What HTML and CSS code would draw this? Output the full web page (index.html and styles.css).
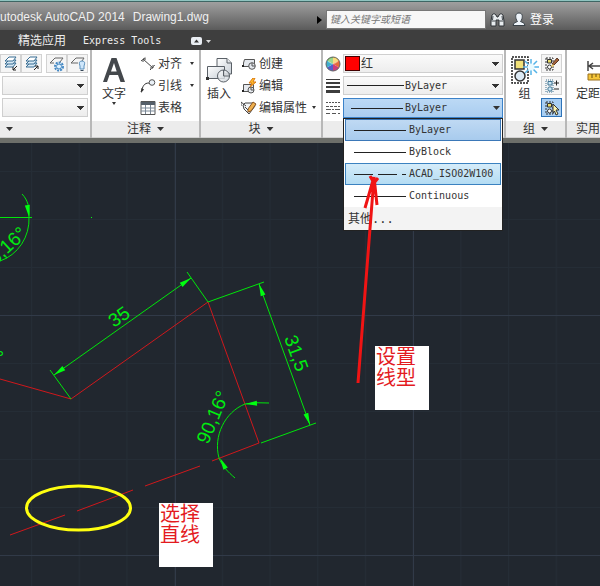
FILE: index.html
```html
<!DOCTYPE html>
<html lang="zh-CN">
<head>
<meta charset="utf-8">
<title>Autodesk AutoCAD 2014 - Drawing1.dwg</title>
<meta name="viewport" content="width=device-width, initial-scale=1">
<link rel="stylesheet" href="styles.css">
</head>
<body>
<div class="app">
  <header class="titlebar">
    <h1 class="title"><span>utodesk AutoCAD 2014</span><span>Drawing1.dwg</span></h1>
    <form class="search">
      <svg class="search-arrow" width="5" height="8" viewBox="0 0 5 8"><path d="M0 0L5 4L0 8Z"/></svg>
      <input class="search-box" type="text" placeholder="键入关键字或短语" aria-label="键入关键字或短语">
      <button class="bar-btn" type="button" aria-label="搜索">
        <svg width="15" height="15" viewBox="0 0 15 15"><path d="M2 3Q4 0 6 3L7 5H8L9 3Q11 0 13 3L14 9V14H9V8H6V14H1V9Z" fill="#e8ecef" stroke="#2e3236"/><path d="M1.500 9H5.500M9.500 9H13.500M3 4L2.500 8M12 4L12.500 8" stroke="#42484d"/></svg>
      </button>
      <button class="bar-btn login" type="button">
        <svg width="14" height="15" viewBox="0 0 14 15"><path d="M7 1C3.500 1 3.400 4 4 6.500Q4.500 8.500 5.500 9.500Q1 10.500 1 13.500H13Q13 10.500 8.500 9.500Q9.500 8.500 10 6.500C10.600 4 10.500 1 7 1Z" fill="#eef4fa" stroke="#3a4248"/></svg>
        <span>登录</span>
      </button>
    </form>
  </header>

  <nav class="tabs">
    <a class="tab" href="#featured">精选应用</a>
    <a class="tab mono" href="#express">Express Tools</a>
    <button class="tab-toggle" type="button" aria-label="最小化功能区">
      <svg width="20" height="8" viewBox="0 0 20 8"><rect x="0" y="0" width="11" height="8" rx="2" fill="#e9edf2"/><path d="M3 5.500L5.500 2.500L8 5.500Z" fill="#333"/><path d="M15 3H20L17.500 6Z" fill="#ddd"/></svg>
    </button>
  </nav>

  <div class="ribbon">
    <section class="panel layers">
      <div class="panel-body rows">
        <div class="layer-tools">
          <div class="btn-pair">
            <button class="tool" type="button" aria-label="图层匹配"><svg width="16" height="16" viewBox="0 0 16 16" fill="#d9eaf5" stroke="#376d93"><path d="M2 11L6 7H13L10 11Z"/><path d="M2 8L6 4H13L10 8Z"/><path d="M2 5L6 1H13L10 5Z" fill="#fff"/><path d="M14 10L10 14M10 11V14H13" fill="none" stroke="#222"/></svg></button>
            <button class="tool" type="button" aria-label="上一个图层"><svg width="16" height="16" viewBox="0 0 16 16" fill="#d9eaf5" stroke="#376d93"><path d="M2 11L6 7H13L10 11Z"/><path d="M2 8L6 4H13L10 8Z"/><path d="M2 5L6 1H13L10 5Z" fill="#fff"/><path d="M10 14L14 10M11 10H14V13" fill="none" stroke="#222"/></svg></button>
          </div>
          <div class="btn-pair">
            <button class="tool" type="button" aria-label="冻结"><svg width="16" height="16" viewBox="0 0 16 16" fill="none"><path d="M1 7L6 2H14L11 6" stroke="#666"/><path d="M1 7H5" stroke="#666"/><circle cx="10" cy="10.500" r="4" stroke="#4388c4" stroke-width="2" stroke-dasharray="2 1"/><circle cx="10" cy="10.500" r="2.500" fill="#e1f3ff" stroke="#4388c4"/></svg></button>
            <button class="tool" type="button" aria-label="关闭图层"><svg width="16" height="16" viewBox="0 0 16 16" fill="none"><path d="M1 7L6 2H14L12 5M1 7H8" stroke="#666"/><path d="M10 13V10Q8 5 12 5Q16 5 14 10V13Z" fill="#cfe7fb" stroke="#5c91bd"/><path d="M10.500 14.500H13.500" stroke="#345"/></svg></button>
          </div>
        </div>
        <select class="combo" aria-label="图层"><option></option></select>
        <select class="combo" aria-label="图层状态"><option></option></select>
      </div>
      <button class="panel-title start" type="button" aria-label="图层"><i class="caret"></i></button>
    </section>

    <section class="panel annotate">
      <div class="panel-body">
        <button class="big" type="button">
          <svg width="24" height="28" viewBox="0 0 24 28"><path d="M1 26L9.500 2H14.500L23 26H18.500L16 19H7.500L5 26ZM9 15.500H14.700L12 7Z" fill="#44484c" fill-rule="evenodd"/></svg>
          <span>文字</span><i class="caret small"></i>
        </button>
        <div class="rows commands">
          <button class="command" type="button"><svg width="16" height="16" viewBox="0 0 16 16" fill="none" stroke="#444"><path d="M1 5L6 1M10 14L15 9" stroke-dasharray="2 1"/><path d="M3 3L13 12M3 6V3H6M13 9V12H10"/></svg><span>对齐</span><i class="caret small"></i></button>
          <button class="command" type="button"><svg width="16" height="16" viewBox="0 0 16 16" fill="none" stroke="#555"><path d="M1 14C3 8 4 5 9 5" stroke="#333"/><path d="M1 15L1.500 10L4 11.500Z" fill="#333" stroke="none"/><circle cx="12" cy="4.500" r="2.800" fill="#eaf1f7"/></svg><span>引线</span><i class="caret small"></i></button>
          <button class="command" type="button"><svg width="16" height="16" viewBox="0 0 16 16"><path d="M1 1.500H15V14.500H1Z" fill="#fff" stroke="#555"/><path d="M1 2H15V5H1Z" fill="#555f69"/><path d="M1 8H15M1 11H15M5.500 5V14M10.500 5V14" stroke="#7a8896"/></svg><span>表格</span></button>
        </div>
      </div>
      <button class="panel-title" type="button">注释<i class="caret"></i></button>
    </section>

    <section class="panel block">
      <div class="panel-body">
        <button class="big" type="button">
          <svg width="28" height="28" viewBox="0 0 28 28"><defs><linearGradient id="sheet" x2="1" y2="1"><stop stop-color="#fff"/><stop offset="1" stop-color="#c8cfd6"/></linearGradient></defs><g fill="url(#sheet)" stroke="#5a6067"><path d="M12 2.500H22L26.500 7V18H12Z"/><path d="M22 2.500V7H26.500"/><path d="M2.500 10.500H19.500V22.500H2.500Z"/><circle cx="18.500" cy="20" r="6" fill-opacity=".8"/></g><path d="M18.500 14V20H25" fill="none" stroke="#5a6067"/><path d="M1 21H4V24H1Z" fill="#333"/></svg>
          <span>插入</span>
        </button>
        <div class="rows commands">
          <button class="command" type="button"><svg width="16" height="16" viewBox="0 0 16 16" fill="#e5e9ee" stroke="#555"><path d="M3.500 3.500H13.500V10.500H2.500V7Z"/><circle cx="11" cy="10" r="3.300"/><path d="M11 7V10H14" fill="none"/><path d="M1 9H3V11H1Z" fill="#222" stroke="none"/></svg><span>创建</span></button>
          <button class="command" type="button"><svg width="16" height="16" viewBox="0 0 16 16" fill="#e5e9ee" stroke="#555"><path d="M2.500 6.500H12.500V13.500H2.500Z"/><circle cx="10" cy="12" r="3"/><path d="M10 9V12H13" fill="none"/><path d="M12 0L8 5H11L9 9L15 4H12L14 0Z" fill="#ffbd2c" stroke="#d97913"/><path d="M1 12H3V14H1Z" fill="#222" stroke="none"/></svg><span>编辑</span></button>
          <button class="command" type="button"><svg width="16" height="16" viewBox="0 0 16 16" fill="#f3f5f7" stroke="#444"><path d="M2 5L4 3H13L14 6L8 14L3 9Z"/><path d="M0 2L5 6M0 2V6" fill="none"/><path d="M7 9L12 2L15 4L10 11L7 12Z" fill="#efb04d" stroke="#8a5727"/><path d="M4 7L7 10" fill="none"/></svg><span>编辑属性</span><i class="caret small"></i></button>
        </div>
      </div>
      <button class="panel-title" type="button">块<i class="caret"></i></button>
    </section>

    <section class="panel properties">
      <div class="panel-body rows">
        <div class="property">
          <svg width="16" height="16" viewBox="0 0 16 16"><path d="M8 8V1A7 7 0 0 1 14 4.500Z" fill="#f5c63f"/><path d="M8 8L14 4.500A7 7 0 0 1 14 11.500Z" fill="#e66b3b"/><path d="M8 8L14 11.500A7 7 0 0 1 8 15Z" fill="#cd3d78"/><path d="M8 8V15A7 7 0 0 1 2 11.500Z" fill="#5260ca"/><path d="M8 8L2 11.500A7 7 0 0 1 2 4.500Z" fill="#3eaecd"/><path d="M8 8L2 4.500A7 7 0 0 1 8 1Z" fill="#6bc154"/><circle cx="8" cy="8" r="7" fill="none" stroke="#666"/><ellipse cx="8" cy="5" rx="5" ry="3" fill="#fff" opacity=".35"/></svg>
          <div class="combo-wrap"><i class="swatch"></i><select class="combo color" aria-label="对象颜色"><option>红</option></select></div>
        </div>
        <div class="property">
          <svg width="16" height="16" viewBox="0 0 16 16" stroke="#3d3d3d"><path d="M1 1.500H15"/><path d="M1 5H15" stroke-width="2"/><path d="M1 9H15" stroke-width="2"/><path d="M1 13.500H15" stroke-width="3"/></svg>
          <div class="combo-wrap"><i class="line-sample weight"></i><select class="combo mono lined" aria-label="线宽"><option>ByLayer</option></select></div>
        </div>
        <div class="property">
          <svg width="16" height="16" viewBox="0 0 16 16" stroke="#555"><path d="M1 2.500H15" stroke-dasharray="2 1"/><path d="M1 6.500H15" stroke-dasharray="3 1"/><path d="M1 9.500H15" stroke-dasharray="5 1 2 1"/><path d="M1 13.500H15" stroke-dasharray="4 2"/></svg>
          <div class="combo-wrap">
            <button class="combo open mono" type="button" aria-haspopup="listbox" aria-expanded="true"><i class="line-sample"></i><span>ByLayer</span><i class="caret"></i></button>
            <div class="menu mono">
              <ul class="options" role="listbox" aria-label="线型">
                <li class="option current" role="option" aria-selected="true"><i class="sample"></i>ByLayer</li>
                <li class="option" role="option" aria-selected="false"><i class="sample"></i>ByBlock</li>
                <li class="option hover" role="option" aria-selected="false"><i class="sample dashed"></i>ACAD_ISO02W100</li>
                <li class="option" role="option" aria-selected="false"><i class="sample"></i>Continuous</li>
              </ul>
              <button class="more" type="button">其他...</button>
            </div>
          </div>
        </div>
      </div>
      <div class="panel-title"></div>
    </section>

    <section class="panel group">
      <div class="panel-body">
        <button class="big" type="button">
          <svg width="28" height="28" viewBox="0 0 28 28"><path d="M1 1H17V27H1Z" fill="#fff" stroke="#222" stroke-width="1.500" stroke-dasharray="2 1"/><path d="M4 4H13V13H4Z" fill="#f1e178" stroke="#333" stroke-width="1.500"/><circle cx="9" cy="20" r="5" fill="#dceaf5" stroke="#333" stroke-width="1.500"/><path d="M20 3V19M12 11H28M14 5L26 17M26 5L14 17" stroke="#55b4e7" stroke-width="1.500"/><circle cx="20" cy="11" r="3.500" fill="#e9faff"/></svg>
          <span>组</span>
        </button>
        <div class="rows">
          <button class="tool" type="button" aria-label="解除编组"><svg width="16" height="16" viewBox="0 0 16 16"><path d="M2 2H9V14H2Z" fill="none" stroke="#333" stroke-dasharray="2 1"/><path d="M3.500 3.500H7.500V7H3.500Z" fill="#eadb68" stroke="#333"/><circle cx="5.500" cy="11" r="2" fill="#fff" stroke="#333"/><path d="M8 8L13 2L15 4L10 9Z" fill="#a4633b" stroke="#593927"/><path d="M7 10L9 8L10 10L8 11Z" fill="#f5d16a"/></svg></button>
          <button class="tool" type="button" aria-label="组编辑"><svg width="16" height="16" viewBox="0 0 16 16" fill="#cde8f6" stroke="#3f7391"><path d="M2 2H9V14H2Z" fill="none" stroke-dasharray="1 1"/><path d="M4 3.500H8V7H4Z"/><circle cx="6" cy="11" r="2.200"/><path d="M10 5H15M12.500 2.500V7.500M10 11H15" stroke="#222"/></svg></button>
          <button class="tool active" type="button" aria-label="启用组选择" aria-pressed="true"><svg width="16" height="16" viewBox="0 0 16 16"><path d="M2 2H9V14H2Z" fill="none" stroke="#333" stroke-dasharray="2 1"/><path d="M3.500 3.500H7.500V7H3.500Z" fill="#eadb68" stroke="#333"/><circle cx="5.500" cy="11" r="2" fill="#fff" stroke="#333"/><path d="M9 4L15 10H12L14 14L12 15L10.500 11L9 13Z" fill="#fff6ac" stroke="#333"/></svg></button>
        </div>
      </div>
      <button class="panel-title" type="button">组<i class="caret"></i></button>
    </section>

    <section class="panel utilities">
      <div class="panel-body">
        <button class="big" type="button">
          <svg width="28" height="28" viewBox="0 0 28 28"><path d="M1 5V15M27 5V15M2 10H26M6 7L2 10L6 13M22 7L26 10L22 13" fill="none" stroke="#444" stroke-width="1.500"/><path d="M1 18H27V24H1Z" fill="#f5c63b" stroke="#9b711c"/><path d="M5 18V22M9 18V21M13 18V22M17 18V21M21 18V22" stroke="#6b5013"/></svg>
          <span>定距</span>
        </button>
      </div>
      <button class="panel-title" type="button">实用</button>
    </section>
  </div>

  <main class="workspace">
    <svg class="drawing" width="100%" height="100%" aria-label="Drawing1">
      <defs>
        <pattern id="minor" x="31" y="28" width="47.700" height="48" patternUnits="userSpaceOnUse"><path d="M.5 0V48M0 .5H48" stroke="#252d36" fill="none"/></pattern>
        <pattern id="major" x="175" y="172" width="238" height="240" patternUnits="userSpaceOnUse"><path d="M.5 0V240M0 .5H238" stroke="#313a48" fill="none"/></pattern>
        <path id="tip" d="M0 0L-12 -2.500V2.500Z"/>
      </defs>
      <rect width="100%" height="100%" fill="url(#minor)"/>
      <rect width="100%" height="100%" fill="url(#major)"/>
      <g transform="translate(0 -143)">
        <g class="red-line">
          <path d="M0 379L71 399L208 302L259 443"/>
          <path d="M259 443L212 461M200 466L145 486M133 490L77 511M65 515L10 535"/>
        </g>
        <g class="dimension">
          <path d="M0 217.500H32"/>
          <path d="M29 217A42 44 0 0 1 0 261M29 217C30 209 28 200 22 194"/>
          <path d="M71 399L50 370M208 302L187 272M54 375L191 278"/>
          <path d="M208 302L264 282M261 443L316 423M259 284L310 425"/>
          <path d="M269 403Q257 402 245 404C225 412 213 436 219 458C222 466 228 472 235 478"/>
        </g>
        <g class="tips">
          <use href="#tip" transform="translate(29 217) rotate(82)"/>
          <use href="#tip" transform="translate(54 375) rotate(145)"/>
          <use href="#tip" transform="translate(191 278) rotate(-35)"/>
          <use href="#tip" transform="translate(259 284) rotate(-110)"/>
          <use href="#tip" transform="translate(310 425) rotate(70)"/>
          <use href="#tip" transform="translate(245 404) rotate(176)"/>
          <use href="#tip" transform="translate(220 458) rotate(-118)"/>
          <rect x="91" y="217" width="1" height="1"/>
        </g>
        <g class="dim-text">
          <text transform="translate(114 328) rotate(-35)">35</text>
          <text transform="translate(284 338) rotate(70)">31,5</text>
          <text transform="translate(208 445) rotate(-67)">90,16°</text>
          <text transform="translate(28 235) rotate(-43)" text-anchor="end">5,16°</text>
          <text x="4" y="364" text-anchor="end">°</text>
        </g>
        <ellipse class="marker" cx="78.500" cy="508" rx="52" ry="22"/>
      </g>
    </svg>
    <p class="note linetype">设置<br>线型</p>
    <p class="note pick">选择<br>直线</p>
  </main>
  <svg class="pointer" width="32" height="216" viewBox="0 0 32 216" aria-hidden="true"><path d="M4 213L20 7M20 7L11 38M20 7L23 35M16 6L20 13L24 8"/></svg>
</div>
</body>
</html>
```
FILE: styles.css
```css
* { box-sizing: border-box; }

body {
  margin: 0;
  font: 12px/16px "Liberation Sans", "Noto Sans CJK SC", sans-serif;
  color: #333;
}

button, input, select { font: inherit; color: inherit; margin: 0; padding: 0; }
button { border: 0; background: none; }
svg { display: block; flex: none; }

.mono { font: 10px/16px "DejaVu Sans Mono", "Noto Sans CJK SC", monospace; }

.app {
  position: relative;
  display: flex;
  flex-direction: column;
  min-height: 100vh;
  overflow: hidden;
}

/* Title bar */
.titlebar {
  display: flex;
  justify-content: space-between;
  height: 30px;
  border-top: 1px solid #8fc4c0;
  box-shadow: inset 0 1px #3f6664;
  background: linear-gradient(#a2a2a2, #858585 40%, #5b5b5b);
}
.title {
  display: flex;
  gap: 8px;
  margin: 0;
  padding-top: 8px;
  font-size: 12px;
  line-height: 16px;
  font-weight: 400;
  color: #f0f0f0;
  white-space: nowrap;
}
.search { display: flex; align-items: center; padding: 8px 46px 0 0; }
.search-arrow { margin-right: 4px; }
.search-box {
  width: 160px;
  height: 19px;
  padding: 0 3px;
  border: 1px solid #777;
  background: #f7f7f7;
  font-size: 10px;
  font-style: italic;
}
.search-box::placeholder { color: #777; opacity: 1; }
.bar-btn { display: flex; align-items: center; gap: 4px; margin-left: 4px; color: #fff; }
.login { margin-left: 7px; }

/* Tabs */
.tabs {
  display: flex;
  align-items: center;
  gap: 17px;
  height: 20px;
  padding: 2px 18px 0;
  background: #3e3e3e;
}
.tab { color: #eee; text-decoration: none; }
.tab-toggle { margin-left: 13px; }

/* Ribbon */
.ribbon {
  display: flex;
  height: 93px;
  padding-bottom: 5px;
  background: #6d6f6a;
}
.panel {
  flex: none;
  display: flex;
  flex-direction: column;
  border-right: 2px solid #b8b8b8;
  background: #fff;
}
.layers { width: 92px; }
.annotate { width: 109px; }
.block { width: 122px; }
.properties { flex: 1; min-width: 140px; }
.group { width: 61px; }
.utilities { width: 33px; border-right: 0; overflow: hidden; }

.panel-body { flex: 1; display: flex; padding: 4px 2px 0; }
.rows { display: flex; flex-direction: column; gap: 3px; }
.panel-title {
  display: flex;
  align-items: center;
  justify-content: center;
  gap: 6px;
  width: 100%;
  height: 17px;
  border-bottom: 1px solid #d0d0d0;
  background: #ececec;
  white-space: nowrap;
}
.panel-title.start { justify-content: flex-start; padding-left: 6px; }
.utilities .panel-title { justify-content: flex-end; }

.caret {
  flex: none;
  width: 7px;
  height: 4px;
  background: #333;
  clip-path: polygon(0 0, 100% 0, 50% 100%);
}
.caret.small { width: 4px; height: 3px; }

.big {
  display: flex;
  flex-direction: column;
  align-items: center;
  padding-top: 2px;
  white-space: nowrap;
}
.big span { margin-top: 2px; }
.annotate .big { width: 40px; }
.block .big { width: 32px; }
.group .big { width: 33px; }
.utilities .panel-body { padding-left: 9px; padding-right: 0; }
.utilities .big { align-items: flex-start; }
.utilities .big svg { margin-left: 11px; }

.commands { flex: 1; margin-left: 6px; }
.command { display: flex; align-items: center; gap: 2px; height: 19px; white-space: nowrap; }
.command .caret { margin-left: auto; margin-right: 3px; }

.tool {
  display: flex;
  align-items: center;
  justify-content: center;
  width: 21px;
  height: 19px;
  border: 1px solid #d2d2d2;
  background: #f5f5f5;
}
.tool.active { border-color: #2e73b8; background: #a9cff3; }
.btn-pair { display: flex; }
.layer-tools { display: flex; justify-content: flex-end; gap: 4px; }

.combo {
  width: 100%;
  height: 19px;
  border: 1px solid #cfcfcf;
  border-radius: 0;
  appearance: none;
  background:
    linear-gradient(to bottom right, #333 50%, transparent 50%) right 2px center / 4px 4px no-repeat,
    linear-gradient(to bottom left, #333 50%, transparent 50%) right 6px center / 4px 4px no-repeat,
    linear-gradient(#fafafa, #ededed);
}
.property { display: flex; align-items: center; gap: 2px; }
.properties .panel-body { padding-right: 1px; }
.combo-wrap { position: relative; flex: 1; }
.combo-wrap .combo { display: block; }
.combo.color { padding-left: 17px; }
.combo.lined { padding-left: 61px; }
.swatch {
  position: absolute;
  left: 2px;
  top: 2px;
  width: 15px;
  height: 15px;
  border: 1px solid #400;
  background: #f00;
}
.line-sample { width: 52px; height: 1px; background: #222; }
.line-sample.weight { position: absolute; left: 4px; top: 9px; width: 57px; }
.combo.open {
  display: flex;
  align-items: center;
  gap: 2px;
  height: 20px;
  padding: 0 2px 0 7px;
  border-color: #3b82c9;
  background: linear-gradient(#bcd9f5, #a9cdf0);
}
.combo.open .caret { margin-left: auto; }

.menu {
  position: absolute;
  z-index: 2;
  top: 100%;
  left: 0;
  right: 0;
  border: 1px solid #222;
  background: #fff;
}
.options { margin: 0; padding: 0 1px; list-style: none; }
.option {
  display: flex;
  align-items: center;
  gap: 3px;
  height: 22px;
  padding-left: 8px;
  border: 1px solid transparent;
  white-space: nowrap;
}
.option.current { border-color: #3b78b8; background: linear-gradient(#bfd9f3, #a8cbed); }
.option.hover { border-color: #3b82c0; background: linear-gradient(#d5ecf9, #b4dcf3); }
.sample { width: 52px; height: 1px; background: #222; }
.sample.dashed {
  background: linear-gradient(90deg, #222 19px, transparent 19px 24px, #222 24px 43px, transparent 43px 48px, #222 48px);
}
.more {
  display: block;
  width: 100%;
  height: 23px;
  padding-left: 4px;
  background: #f3f3f3;
  font-size: 12px;
  text-align: left;
}

/* Drawing area */
.workspace {
  position: relative;
  flex: 1;
  background: #21272f;
}
.drawing { position: absolute; inset: 0; }
.red-line { fill: none; stroke: #d0181c; }
.dimension { fill: none; stroke: #00e60a; }
.tips { fill: #00ff10; }
.dim-text { fill: #00ee10; font-size: 19px; }
.marker { fill: none; stroke: #ffff10; stroke-width: 3; }

.note {
  position: absolute;
  width: 54px;
  height: 64px;
  margin: 0;
  padding: 1px;
  background: #fff;
  color: #e31b1f;
  font-size: 20px;
  line-height: 21px;
}
.note.linetype { left: 375px; top: 203px; }
.note.pick { left: 159px; top: 360px; }

.pointer {
  position: absolute;
  z-index: 3;
  left: 354px;
  top: 170px;
  fill: none;
  stroke: #f01414;
  stroke-width: 3;
  pointer-events: none;
}
```
